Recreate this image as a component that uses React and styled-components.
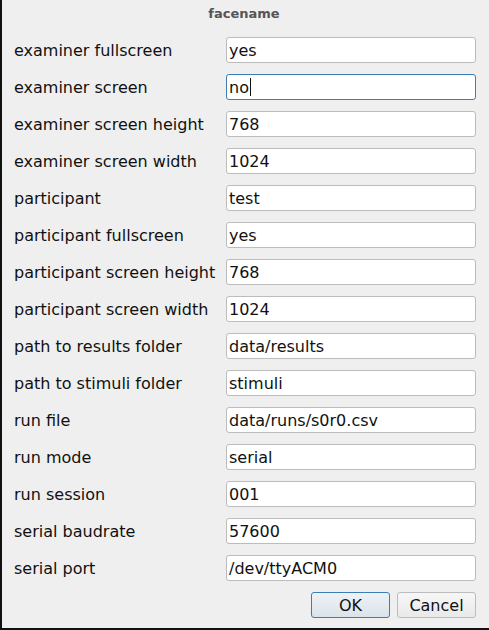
import React from 'react'
import styled, { createGlobalStyle } from 'styled-components'

const GlobalStyle = createGlobalStyle`
  html, body {
    margin: 0;
    padding: 0;
    background: #efefef;
  }
  * {
    box-sizing: border-box;
  }
`

const fields = [
  ['examiner fullscreen', 'yes'],
  ['examiner screen', 'no', true],
  ['examiner screen height', '768'],
  ['examiner screen width', '1024'],
  ['participant', 'test'],
  ['participant fullscreen', 'yes'],
  ['participant screen height', '768'],
  ['participant screen width', '1024'],
  ['path to results folder', 'data/results'],
  ['path to stimuli folder', 'stimuli'],
  ['run file', 'data/runs/s0r0.csv'],
  ['run mode', 'serial'],
  ['run session', '001'],
  ['serial baudrate', '57600'],
  ['serial port', '/dev/ttyACM0'],
]

const App = () => {
  return (
    <Window>
      <GlobalStyle />
      <Title>facename</Title>
      <Form>
        {fields.map(([label, value, focused]) => (
          <Row key={label}>
            <Label>{label}</Label>
            <Field focused={focused}>
              {value}
              {focused && <Caret />}
            </Field>
          </Row>
        ))}
      </Form>
      <Buttons>
        <Button primary>OK</Button>
        <Button>Cancel</Button>
      </Buttons>
    </Window>
  )
}

export default App

const Window = styled.div`
  width: 489px;
  height: 630px;
  background: #efefef;
  border-left: 2px solid #111;
  border-bottom: 2px solid #111;
  padding-right: 13px;
  font-family: "DejaVu Sans", sans-serif;
  color: #111;
  display: flex;
  flex-direction: column;
`

const Title = styled.div`
  height: 26px;
  display: flex;
  align-items: center;
  justify-content: center;
  padding-left: 10px;
  font-size: 13px;
  font-weight: bold;
  color: #555;
`

const Form = styled.div`
  padding-top: 11px;
  display: flex;
  flex-direction: column;
  gap: 11px;
`

const Row = styled.div`
  display: grid;
  grid-template-columns: 224px 1fr;
  align-items: center;
  height: 26px;
`

const Label = styled.div`
  padding-left: 12px;
  font-size: 16px;
  white-space: nowrap;
`

const Field = styled.div`
  height: 26px;
  display: flex;
  align-items: center;
  padding-left: 2px;
  background: #fff;
  border: 1px solid ${p => (p.focused ? '#3b7db5' : '#bcbcbc')};
  border-radius: 3px;
  font-size: 16px;
`

const Caret = styled.span`
  display: inline-block;
  width: 1px;
  height: 18px;
  background: #111;
  margin-left: 1px;
`

const Buttons = styled.div`
  display: flex;
  justify-content: flex-end;
  gap: 7px;
  padding-top: 11px;
`

const Button = styled.div`
  width: 79px;
  height: 26px;
  display: flex;
  align-items: center;
  justify-content: center;
  font-size: 16px;
  border-radius: 3px;
  border: 1px solid ${p => (p.primary ? '#3b7db5' : '#bcbcbc')};
  background: ${p =>
    p.primary
      ? 'linear-gradient(#eef2f6, #dbe3ea)'
      : 'linear-gradient(#f7f7f7, #e9e9e9)'};
`
